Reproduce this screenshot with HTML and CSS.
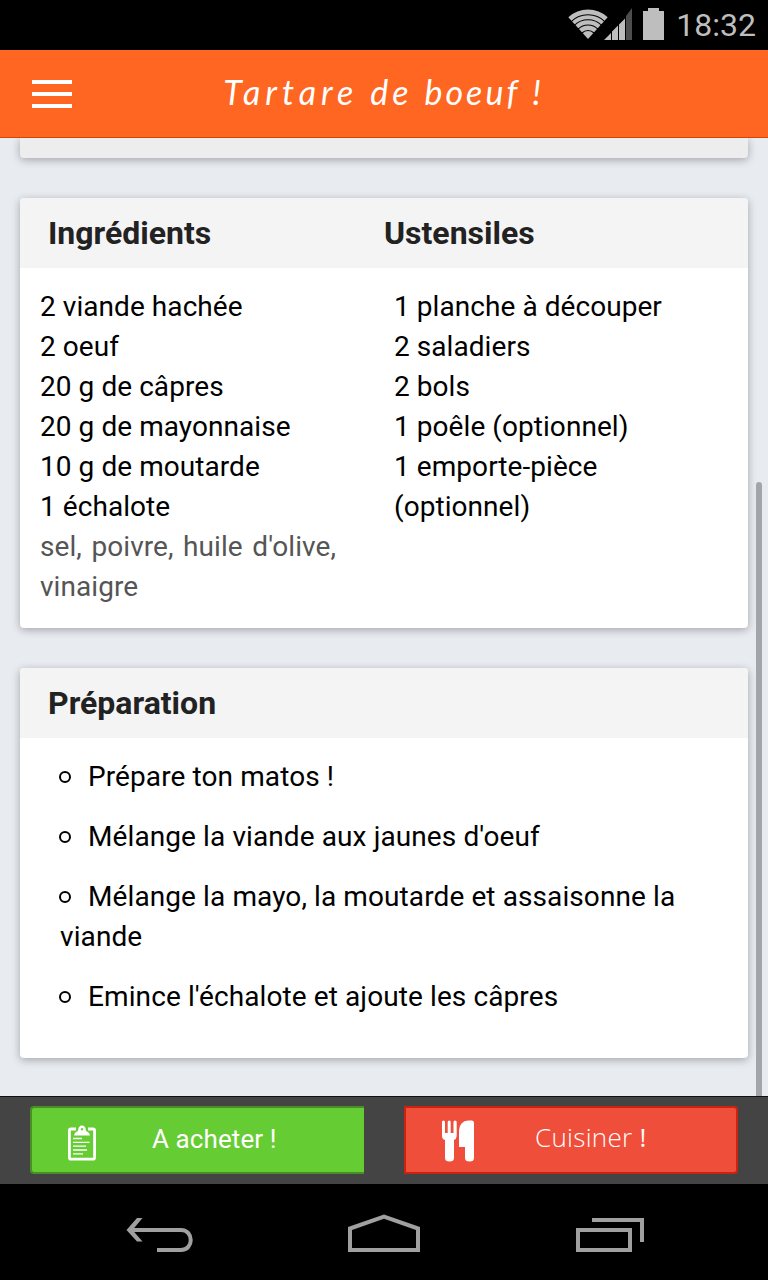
FILE: index.html
```html
<!DOCTYPE html>
<html lang="fr">
<head>
<meta charset="utf-8">
<title>Tartare de boeuf !</title>
<link rel="stylesheet" href="styles.css">
</head>
<body>
<div class="screen">
  <div class="status">
    <svg class="status-icons" width="110" height="50" viewBox="560 0 110 50">
      <path d="M588 39L568.300 17.200A29.400 29.400 0 0 1 607.700 17.200Z" fill="#bebebe"/>
      <g fill="none" stroke="#000" stroke-width="1.150">
        <circle cx="588" cy="39" r="24.300"/>
        <circle cx="588" cy="39" r="19.300"/>
        <circle cx="588" cy="39" r="14"/>
        <circle cx="588" cy="39" r="8.500"/>
      </g>
      <path d="M604 40L611 33V40ZM612 40V31.500L618 25.500V40ZM619 40V24.500L625 18.500V40Z" fill="#bebebe"/>
      <path d="M626 40V16L632 8V40Z" fill="#4d4d4d"/>
      <path d="M643 40V11H648V8H659V11H664V40Z" fill="#bebebe"/>
    </svg>
    <span class="clock">18:32</span>
  </div>
  <header class="topbar">
    <div class="menu"><i></i><i></i><i></i></div>
    <h1 class="title"><span class="wide">Tartare</span> de <span class="tight">boeuf</span> !</h1>
  </header>
  <main class="content">
    <section class="card card-end"></section>
    <section class="card">
      <div class="card-head"><h2>Ingrédients</h2><h2>Ustensiles</h2></div>
      <div class="columns">
        <div class="ingredients">
          <div>2 viande hachée</div>
          <div>2 oeuf</div>
          <div>20 g de câpres</div>
          <div>20 g de mayonnaise</div>
          <div>10 g de moutarde</div>
          <div>1 échalote</div>
          <div class="extras">sel, poivre, huile d'olive, vinaigre</div>
        </div>
        <div class="tools">
          <div>1 planche à découper</div>
          <div>2 saladiers</div>
          <div>2 bols</div>
          <div>1 poêle (optionnel)</div>
          <div>1 emporte-pièce (optionnel)</div>
        </div>
      </div>
    </section>
    <section class="card">
      <div class="card-head"><h2>Préparation</h2></div>
      <ul class="steps">
        <li>Prépare ton matos !</li>
        <li>Mélange la viande aux jaunes d'oeuf</li>
        <li>Mélange la mayo, la moutarde et assaisonne la viande</li>
        <li>Emince l'échalote et ajoute les câpres</li>
      </ul>
    </section>
    <div class="scrollbar"></div>
  </main>
  <footer class="actions">
    <div class="btn buy">
      <svg width="28" height="36" viewBox="0 0 28 36">
        <path d="M8 4H3Q1.400 4 1.400 5.600V32.500Q1.400 34.200 3 34.200H25Q26.600 34.200 26.600 32.500V5.600Q26.600 4 25 4H20" fill="none" stroke="#fff" stroke-width="2.800"/>
        <path fill-rule="evenodd" d="M6 10.500Q6.500 7 10 6Q10.300 .5 14 .5Q17.700 .5 18 6Q21.500 7 22 10.500ZM14 3a1.200 1.200 0 1 0 .01 0Z" fill="#fff"/>
        <path d="M5 13.500H14M5 17.300H21.500M5 21.200H18M5 25H19M5 28.900H15" stroke="#fff" stroke-width="1.300"/>
      </svg>
      <span>A acheter !</span>
    </div>
    <div class="btn cook">
      <svg width="33" height="42" viewBox="0 0 33 42">
        <path d="M0 2Q0 .5 1.500 .5Q3 .5 3 2V13H5.700V2Q5.700 .5 7.200 .5Q8.700 .5 8.700 2V13H11.500V2Q11.500 .5 13 .5Q14.700 .5 14.700 2V16Q14.500 19 12 20V38Q12 41.500 7.500 41.500Q3 41.500 3 38V20Q0 19 0 16Z" fill="#fff"/>
        <path d="M17 27V10Q18 1 26 .5H30Q32 .5 32 3V38Q32 41.500 27.500 41.500Q23 41.500 23 38V27Z" fill="#fff"/>
      </svg>
      <span>Cuisiner <b>!</b></span>
    </div>
  </footer>
  <nav class="navbar">
    <svg width="768" height="96" viewBox="0 1184 768 96" fill="none" stroke="#a0a0a0" stroke-width="4">
      <path d="M130 1230H181C194 1230 194 1250 181 1250H157"/>
      <path d="M137 1218H142.500L132.500 1230L142.500 1241.500H137L126.500 1230Z" fill="#a0a0a0" stroke="none"/>
      <path d="M350 1250V1228.500L384 1216.500L418 1228.500V1250Z"/>
      <path d="M578 1230H630V1250H578ZM592 1220H642V1242"/>
    </svg>
  </nav>
</div>
</body>
</html>
```
FILE: styles.css
```css
*, *::before { box-sizing: border-box; margin: 0; padding: 0; }
body {
  width: 768px;
  height: 1280px;
  overflow: hidden;
  background: #000;
  font-family: Roboto, "Liberation Sans", sans-serif;
}
.screen { height: 1280px; display: flex; flex-direction: column; }
.status {
  height: 50px;
  display: flex;
  align-items: center;
  justify-content: flex-end;
  gap: 6px;
  padding-right: 12px;
  color: #bebebe;
}
.clock { font-size: 32px; line-height: 50px; }
.topbar {
  height: 88px;
  display: grid;
  grid-template-columns: 1fr auto 1fr;
  align-items: center;
  padding: 0 32px;
  background: #ff6622;
  border-bottom: 1px solid #d44500;
}
.menu { display: grid; gap: 8px; width: 40px; padding-top: 1px; }
.menu i { height: 4px; background: #fff; }
.title {
  font-family: "Segoe Print", "Bradley Hand", Lato, sans-serif;
  font-style: italic;
  font-weight: 400;
  font-size: 34px;
  letter-spacing: 4px;
  padding-bottom: 5px;
  color: #fff;
  white-space: nowrap;
}
.title .wide { letter-spacing: 5px; }
.title .tight { letter-spacing: 3px; }
.content {
  position: relative;
  height: 958px;
  overflow: hidden;
  padding: 0 20px;
  display: flex;
  flex-direction: column;
  gap: 40px;
  background: #e8ebf0;
}
.card {
  flex: none;
  background: #fff;
  border-radius: 4px;
  box-shadow: 0 2px 8px rgba(0, 0, 0, .3);
}
.card-end { height: 20px; background: #ededed; border-radius: 0 0 4px 4px; }
.card-head {
  display: grid;
  grid-template-columns: 336px 1fr;
  height: 70px;
  padding-left: 28px;
  background: #f4f4f4;
  border-radius: 4px 4px 0 0;
}
.card-head h2 { font-size: 32px; line-height: 70px; color: #222; }
.columns {
  display: grid;
  grid-template-columns: 296px 296px;
  column-gap: 58px;
  height: 360px;
  padding: 19px 20px;
  font-size: 28px;
  line-height: 40px;
  letter-spacing: .06px;
}
.extras { color: #555; text-align: justify; }
.steps {
  height: 320px;
  padding: 19px 40px;
  display: flex;
  flex-direction: column;
  gap: 20px;
  list-style: none;
  font-size: 28px;
  line-height: 40px;
  letter-spacing: .1px;
}
.steps li::before {
  content: "";
  display: inline-block;
  width: 12px;
  height: 12px;
  margin: 0 17px 3px -1px;
  border: 2px solid #000;
  border-radius: 50%;
}
.scrollbar {
  position: absolute;
  top: 344px;
  right: 6px;
  width: 6px;
  height: 630px;
  border-radius: 3px;
  background: #a4a5a8;
}
.actions {
  height: 88px;
  display: grid;
  grid-template-columns: 334px 334px;
  gap: 40px;
  padding: 9px 30px;
  background: #444;
  border-top: 1px solid #111;
}
.btn {
  height: 68px;
  display: flex;
  align-items: center;
  color: #fff;
  font-size: 26px;
}
.buy {
  padding: 6px 0 0 36px;
  gap: 56px;
  background: #66cc33;
  border: 2px solid #498f24;
  border-right: 0;
  border-radius: 4px 0 0 4px;
}
.buy span { padding-bottom: 8px; letter-spacing: .1px; }
.cook {
  padding-left: 36px;
  gap: 60px;
  background: #ef4e3a;
  border: 2px solid #cc2311;
  border-radius: 0 4px 4px 0;
}
.cook svg { margin-top: 2px; }
.cook span {
  font-family: "Open Sans", "Noto Sans", sans-serif;
  font-weight: 300;
  letter-spacing: .3px;
  padding-bottom: 6px;
}
.cook b { font-weight: 400; }
.navbar { height: 96px; background: #000; }
```
